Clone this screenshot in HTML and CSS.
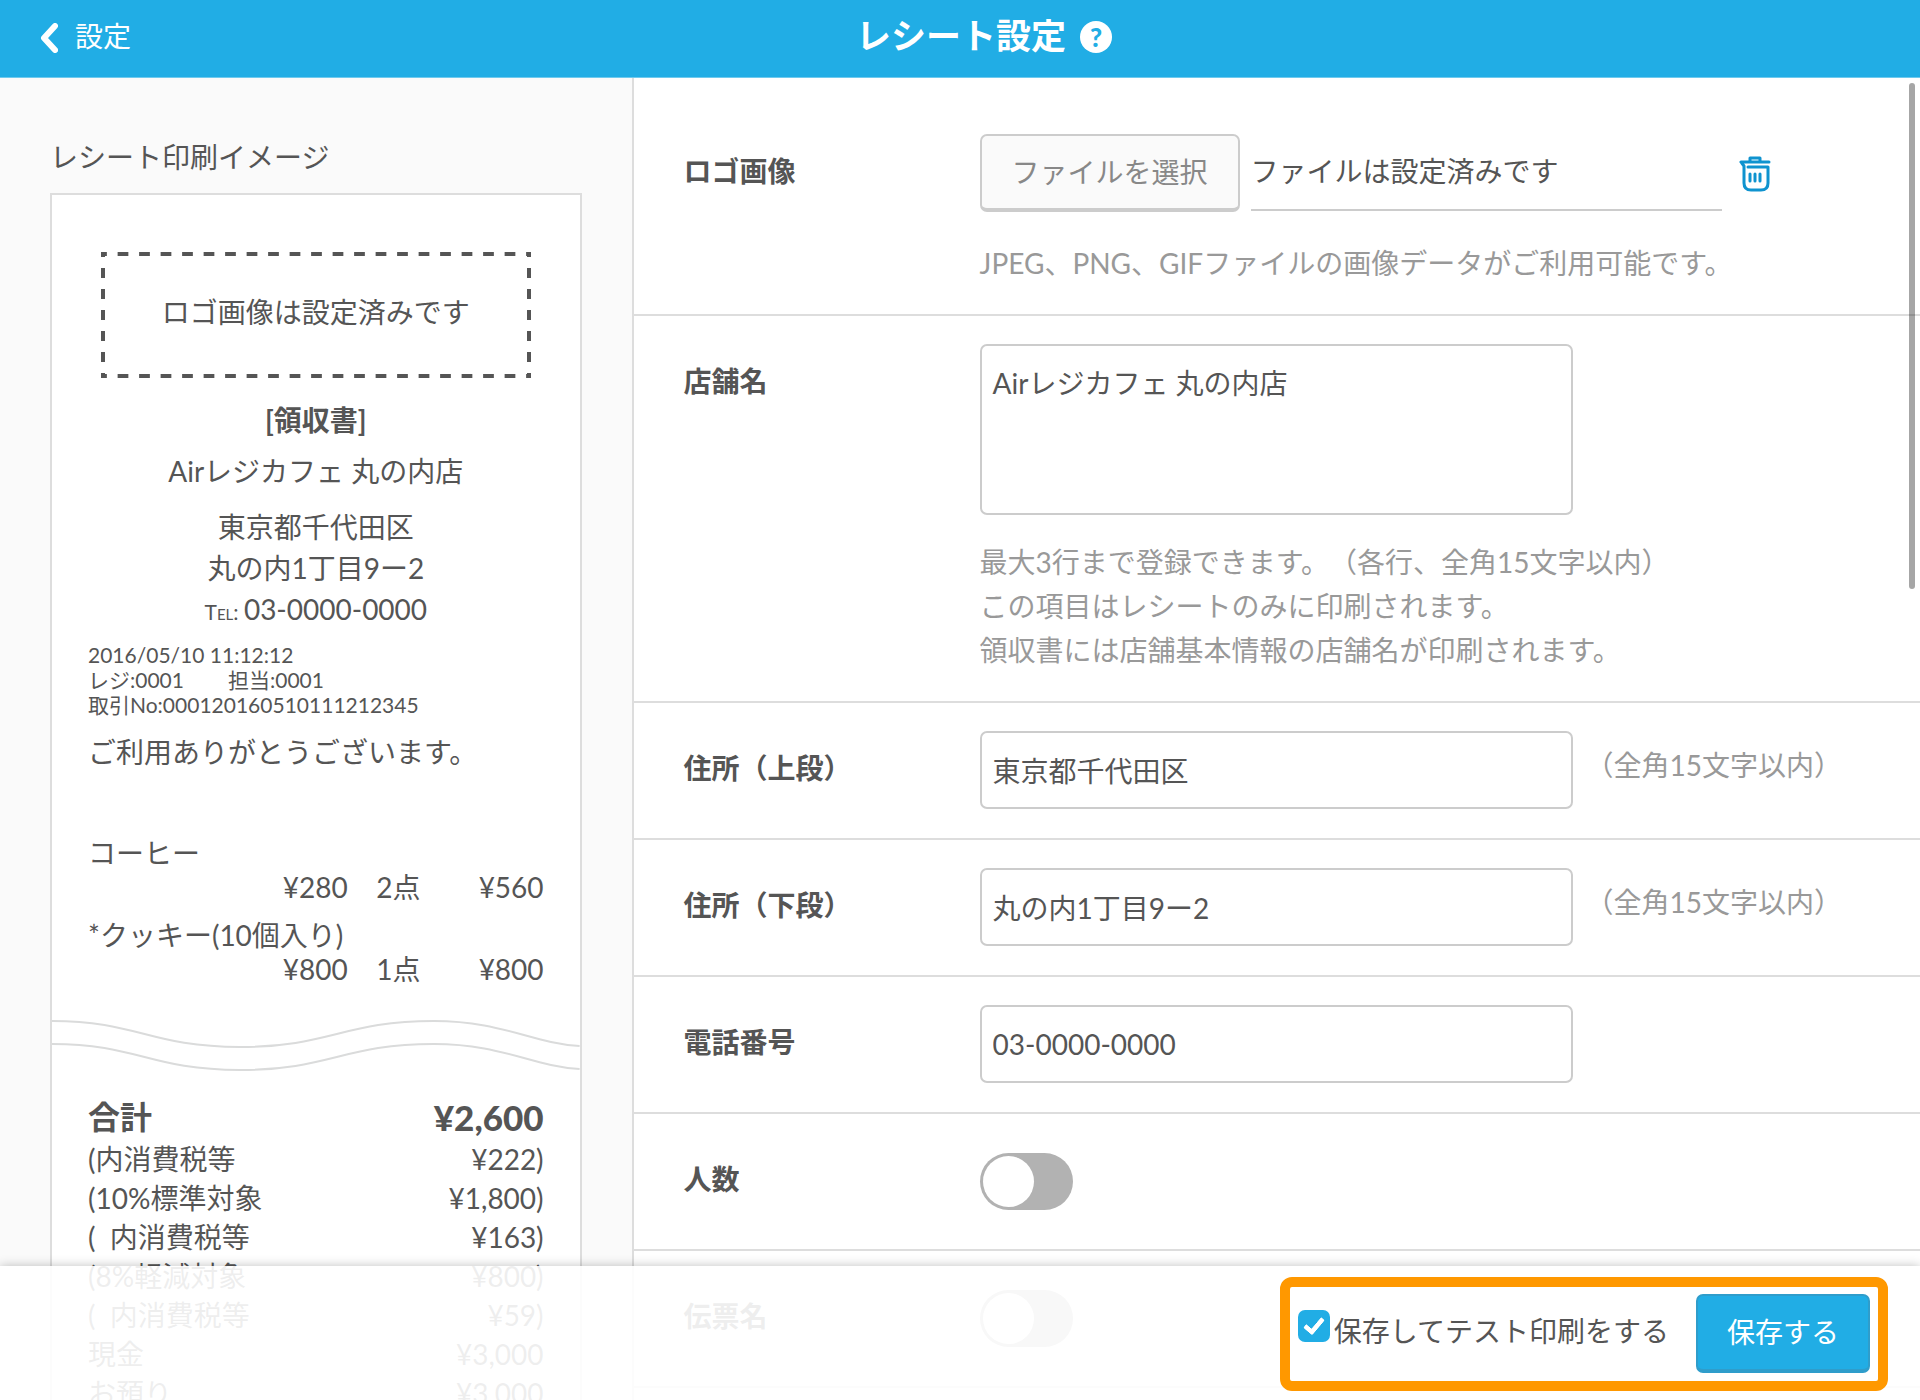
FILE: index.html
```html
<!DOCTYPE html>
<html lang="ja">
<head>
  <meta charset="UTF-8">
  <meta name="viewport" content="width=device-width,initial-scale=1.0">
  <title>レシート設定</title>
  <link rel="stylesheet" href="styles.css">
</head>
<body>
  <header class="header">
    <a class="back" href="#">
      <svg width="18" height="30" viewBox="0 0 18 30" aria-hidden="true"><path d="M15 3L4 15L15 27" fill="none" stroke="#fff" stroke-width="6" stroke-linecap="round" stroke-linejoin="round"/></svg>
      設定
    </a>
    <h1>レシート設定</h1>
    <button class="help" type="button" aria-label="ヘルプ">?</button>
  </header>

  <main class="main">
    <section class="preview">
      <h2>レシート印刷イメージ</h2>
      <div class="receipt">
        <div class="logo">ロゴ画像は設定済みです</div>
        <p class="kind">[領収書]</p>
        <p class="shop">Airレジカフェ 丸の内店</p>
        <p class="address">東京都千代田区<br>丸の内1丁目9ー2<br><span class="tel">Tel: </span>03-0000-0000</p>
        <p class="meta">2016/05/10 11:12:12<br>レジ:0001<span class="staff">担当:0001</span><br>取引No:000120160510111212345</p>
        <p class="thanks">ご利用ありがとうございます。</p>
        <table class="items">
          <tbody>
            <tr><td colspan="3">コーヒー</td></tr>
            <tr class="price"><td>¥280</td><td>2点</td><td>¥560</td></tr>
          </tbody>
          <tbody>
            <tr><td colspan="3">*クッキー(10個入り)</td></tr>
            <tr class="price"><td>¥800</td><td>1点</td><td>¥800</td></tr>
          </tbody>
        </table>
        <svg class="wave" viewBox="0 0 528 53" preserveAspectRatio="none" aria-hidden="true">
          <g fill="none" stroke="#dadbdb" stroke-width="2">
            <path d="M0 2C86 2 98 28 188 28C278 28 292 2 382 2C450 2 480 24 528 27"/>
            <path d="M0 25C86 25 98 51 188 51C278 51 292 25 382 25C450 25 480 47 528 50"/>
          </g>
        </svg>
        <table class="totals">
          <tr class="sum"><th>合計</th><td>¥2,600</td></tr>
          <tr><th>(内消費税等</th><td>¥222)</td></tr>
          <tr><th>(10%標準対象</th><td>¥1,800)</td></tr>
          <tr><th>(&nbsp; 内消費税等</th><td>¥163)</td></tr>
          <tr><th>(8%軽減対象</th><td>¥800)</td></tr>
          <tr><th>(&nbsp; 内消費税等</th><td>¥59)</td></tr>
          <tr><th>現金</th><td>¥3,000</td></tr>
          <tr><th>お預り</th><td>¥3,000</td></tr>
        </table>
      </div>
    </section>

    <form class="settings" id="settings">
      <div class="row row-first">
        <label class="name" for="logo">ロゴ画像</label>
        <div class="field">
          <div class="file">
            <button class="choose" id="logo" type="button">ファイルを選択</button>
            <output class="file-name" for="logo">ファイルは設定済みです</output>
            <button class="trash" type="button" aria-label="削除">
              <svg width="32" height="36" viewBox="0 0 32 36" fill="none" stroke="#0f93cf" stroke-width="3" stroke-linejoin="round" stroke-linecap="round" aria-hidden="true">
                <path d="M2 6H30M11 5V2H21V5M2 6L5 10V27Q5 34 12 34H22Q29 34 29 27V11H9"/>
                <path d="M11 18V25M16 18V25M21 18V25"/>
              </svg>
            </button>
          </div>
          <p class="hint">JPEG、PNG、GIFファイルの画像データがご利用可能です。</p>
        </div>
      </div>
      <div class="row">
        <label class="name" for="shop">店舗名</label>
        <div class="field">
          <textarea id="shop">Airレジカフェ 丸の内店</textarea>
          <p class="hint">最大3行まで登録できます。（各行、全角15文字以内）<br>この項目はレシートのみに印刷されます。<br>領収書には店舗基本情報の店舗名が印刷されます。</p>
        </div>
      </div>
      <div class="row">
        <label class="name" for="address1">住所（上段）</label>
        <div class="field inline">
          <input class="text" id="address1" type="text" value="東京都千代田区">
          <span class="limit">（全角15文字以内）</span>
        </div>
      </div>
      <div class="row">
        <label class="name" for="address2">住所（下段）</label>
        <div class="field inline">
          <input class="text" id="address2" type="text" value="丸の内1丁目9ー2">
          <span class="limit">（全角15文字以内）</span>
        </div>
      </div>
      <div class="row">
        <label class="name" for="tel">電話番号</label>
        <div class="field inline">
          <input class="text" id="tel" type="tel" value="03-0000-0000">
        </div>
      </div>
      <div class="row">
        <label class="name" for="people">人数</label>
        <div class="field inline"><input class="toggle" id="people" type="checkbox"></div>
      </div>
      <div class="row">
        <label class="name" for="slip">伝票名</label>
        <div class="field inline"><input class="toggle" id="slip" type="checkbox"></div>
      </div>
    </form>
    <div class="scroll-thumb"></div>
  </main>

  <footer class="footer">
    <div class="save-box">
      <input class="check" id="test-print" type="checkbox" form="settings" checked>
      <label for="test-print">保存してテスト印刷をする</label>
      <button class="save" type="submit" form="settings">保存する</button>
    </div>
  </footer>
</body>
</html>
```
FILE: styles.css
```css
:root {
  --blue: #21ade5;
  --text: #555;
  --line: #ddd;
  --border: #ccc;
}
*, *::before { box-sizing: border-box; }
body {
  margin: 0;
  height: 100vh;
  display: flex;
  flex-direction: column;
  overflow: hidden;
  color: var(--text);
  background: #fff;
  font-family: Lato, "Noto Sans CJK JP", sans-serif;
  font-size: 28px;
  line-height: 40px;
  text-spacing-trim: space-all;
}
h1, h2, p { margin: 0; font-weight: 400; }
button, input, textarea { font: inherit; color: inherit; margin: 0; }
button { cursor: pointer; }

/* header */
.header {
  position: relative;
  flex: none;
  display: flex;
  align-items: center;
  justify-content: center;
  gap: 14px;
  height: 78px;
  padding-bottom: 4px;
  padding-left: 48px;
  background: var(--blue);
  border-bottom: 1px solid #6fcaee;
  color: #fff;
}
.back {
  position: absolute;
  left: 40px;
  top: 16px;
  display: flex;
  align-items: center;
  gap: 17px;
  color: #fff;
  text-decoration: none;
}
.back svg { margin-top: 4px; }
.header h1 { font-size: 35px; font-weight: 700; padding-bottom: 4px; }
.help {
  width: 32px;
  height: 32px;
  padding: 0;
  border: 0;
  border-radius: 50%;
  background: #fff;
  color: var(--blue);
  font-size: 26px;
  font-weight: 900;
  line-height: 32px;
}

.main { position: relative; flex: 1; display: flex; min-height: 0; }

/* receipt preview */
.preview {
  width: 33%;
  padding: 59px 50px 0;
  background: #fafafa;
  border-right: 2px solid var(--line);
  overflow: hidden;
}
.preview h2 { font-size: 28px; margin-bottom: 16px; }
.receipt {
  background: #fff;
  border: 2px solid var(--line);
  padding-top: 57px;
}
.logo {
  height: 126px;
  margin: 0 49px;
  line-height: 120px;
  text-align: center;
  --dash: var(--text) 0 25%, transparent 25% 75%, var(--text) 75%;
  background:
    linear-gradient(to right, var(--dash)) 0 0 / 21px 4px,
    linear-gradient(to right, var(--dash)) 0 100% / 21px 4px,
    linear-gradient(to bottom, var(--dash)) 0 0 / 4px 21px,
    linear-gradient(to bottom, var(--dash)) 100% 0 / 4px 21px;
  background-repeat: round no-repeat, round no-repeat, no-repeat round, no-repeat round;
}
.kind { margin-top: 22px; font-weight: 700; text-align: center; }
.shop { margin-top: 11px; text-align: center; }
.address { margin-top: 16px; line-height: 41px; text-align: center; }
.tel { font-size: 21px; font-variant: small-caps; }
.meta { margin: 10px 36px 0; font-size: 21px; line-height: 25px; }
.staff { margin-left: 44px; }
.thanks { margin: 15px 36px 0; }
table { border-collapse: collapse; }
th, td { padding: 0; font-weight: 400; text-align: left; }
.items { margin: 64px 36px 0; width: calc(100% - 72px); line-height: 34px; }
.items tbody + tbody::before { content: ""; display: block; height: 14px; }
.price td { text-align: right; }
.price td:first-child { width: 57%; }
.price td:nth-child(2) { width: 16%; }
.wave { display: block; width: 100%; height: 53px; margin-top: 33px; }
.totals { width: calc(100% - 72px); margin: 22px 36px 0; line-height: 39px; }
.totals td { text-align: right; }
.totals .sum { font-size: 32px; line-height: 46px; }
.sum th { font-weight: 700; }
.totals .sum td { font-size: 35px; font-weight: 900; }

/* settings form */
.settings { flex: 1; overflow-y: auto; scrollbar-width: none; }
.row {
  display: flex;
  padding: 28px 48px 29px 50px;
  border-bottom: 2px solid var(--line);
}
.row-first { padding-top: 56px; }
.name { flex: none; width: 296px; line-height: 74px; font-weight: 700; }
.field { flex: 1; }
.inline { display: flex; align-items: center; height: 78px; }
.file { display: flex; height: 78px; margin-bottom: 29px; }
.choose {
  width: 260px;
  border: 2px solid var(--border);
  border-bottom-width: 4px;
  border-radius: 7px;
  background: #fafafa;
  color: #888;
}
.file-name {
  width: 471px;
  height: 77px;
  margin-left: 11px;
  line-height: 74px;
  border-bottom: 2px solid var(--border);
}
.trash { display: flex; align-items: center; padding: 2px 0 0; margin-left: 17px; border: 0; background: none; }
.hint { line-height: 44px; color: #999; }
.text, textarea {
  display: block;
  width: 593px;
  height: 78px;
  padding: 0 11px;
  border: 2px solid var(--border);
  border-radius: 7px;
  background: #fff;
}
textarea { height: 171px; margin-bottom: 25px; padding-top: 17px; resize: none; }
.limit { margin-left: 13px; padding-bottom: 10px; color: #999; }
.toggle {
  appearance: none;
  width: 93px;
  height: 57px;
  padding: 3px;
  border-radius: 29px;
  background: #b2b2b2;
}
.toggle::before {
  content: "";
  display: block;
  width: 51px;
  height: 51px;
  border-radius: 50%;
  background: #fff;
}
.toggle:checked { background: var(--blue); }
.toggle:checked::before { margin-left: auto; }
.scroll-thumb {
  position: absolute;
  top: 5px;
  right: 5px;
  width: 6px;
  height: 506px;
  border-radius: 3px;
  background: rgba(0, 0, 0, 0.35);
}

/* save bar */
.footer {
  position: fixed;
  left: 0;
  right: 0;
  bottom: 0;
  display: flex;
  justify-content: flex-end;
  padding: 11px 32px 9px;
  background: rgba(255, 255, 255, 0.9);
  box-shadow: 0 0 10px rgba(0, 0, 0, 0.25);
}
.save-box {
  display: flex;
  align-items: center;
  height: 114px;
  padding: 0 8px 2px;
  border: 10px solid #ff9800;
  border-radius: 12px;
  background: #fff;
}
.check {
  appearance: none;
  width: 32px;
  height: 32px;
  margin: 0 4px 14px 0;
  border-radius: 7px;
  background: var(--blue);
}
.check:checked::before {
  content: "";
  display: block;
  width: 12px;
  height: 20px;
  margin: 4px 10px;
  border: solid #fff;
  border-width: 0 5px 5px 0;
  border-radius: 2px;
  transform: rotate(40deg);
}
.save-box label { padding-bottom: 4px; }
.save {
  width: 174px;
  height: 79px;
  margin-left: 27px;
  border: 2px solid #2f9dcb;
  border-bottom-width: 4px;
  border-radius: 7px;
  background: var(--blue);
  color: #fff;
}
```
